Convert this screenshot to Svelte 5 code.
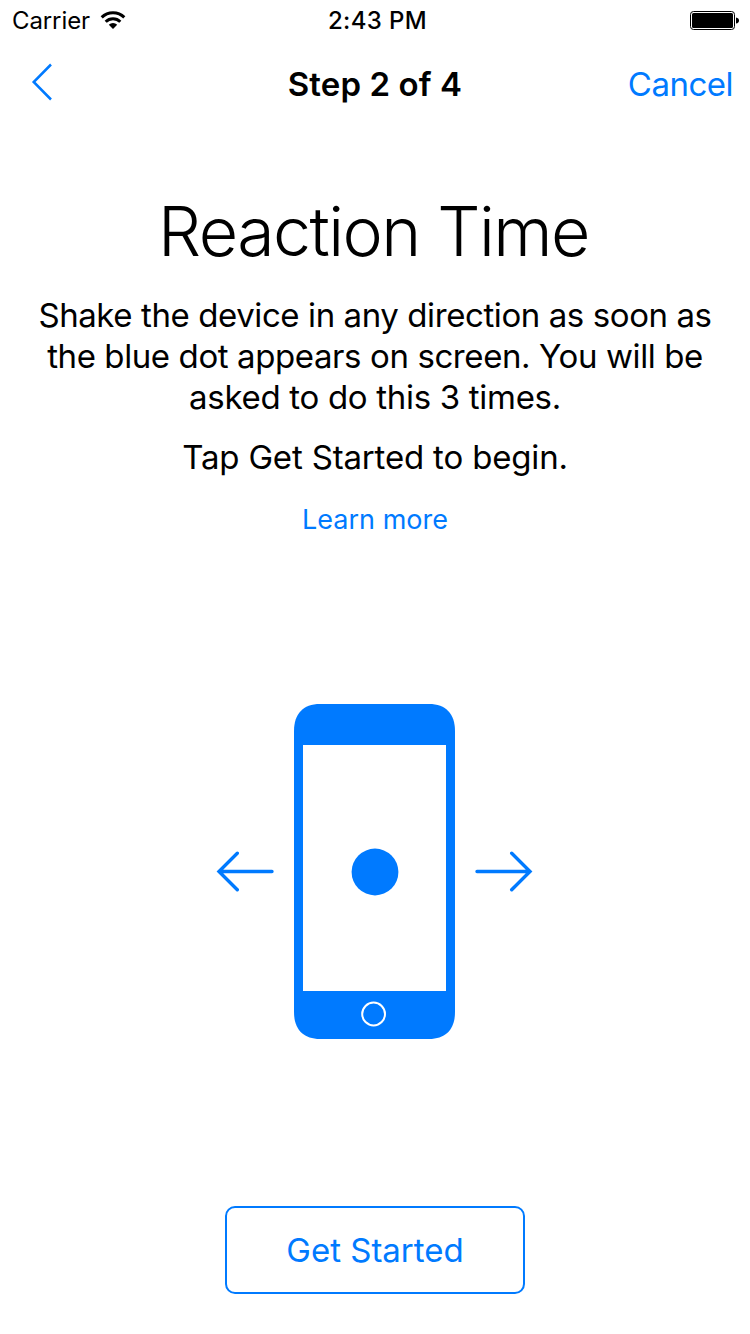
<script>
  const lines = [
    { text: 'Shake the device in any direction as soon as', spacing: -0.41 },
    { text: 'the blue dot appears on screen. You will be', spacing: -0.4 },
    { text: 'asked to do this 3 times.', spacing: -0.3 }
  ];
</script>

<div class="screen">
  <header class="status">
    <div class="carrier"><span>Carrier</span>
      <svg width="26" height="20" viewBox="0 0 26 20"><g fill="none" stroke="#000" stroke-width="3"><path d="M1.700 7.400a16 16 0 0 1 22.600 0"/><path d="M5.700 11.700a10.400 10.400 0 0 1 14.600 0"/></g><path d="M13 19l-4.200-4.200a6 6 0 0 1 8.400 0z"/></svg>
    </div>
    <div class="time">2:43 PM</div>
    <div class="battery"><svg width="49" height="20" viewBox="0 0 49 20"><rect x=".5" y=".5" width="44" height="18" rx="3" fill="none" stroke="#000"/><rect x="2" y="2" width="41" height="15" rx="1.5"/><path d="M46 6.5q3 .5 3 3t-3 3z"/></svg></div>
  </header>
  <nav>
    <svg class="back" width="22" height="38" viewBox="0 0 22 38"><path d="M20 1.500L2.700 19l17.300 17.500" fill="none" stroke="#007aff" stroke-width="2.5"/></svg>
    <h2>Step 2 of 4</h2>
    <button class="cancel">Cancel</button>
  </nav>
  <main>
    <h1>Reaction Time</h1>
    <p class="body">{#each lines as line}<span style="letter-spacing: {line.spacing}px">{line.text}</span>{/each}</p>
    <p class="tap">Tap Get Started to begin.</p>
    <button class="learn">Learn more</button>
    <svg class="art" width="320" height="336" viewBox="0 0 320 336">
      <path d="M105 0H214C231 0 240 10 240 27V308C240 325 231 335 214 335H105C88 335 79 325 79 308V27C79 10 88 0 105 0Z" fill="#007aff"/>
      <rect x="88" y="41" width="143" height="246" fill="#fff"/>
      <circle cx="160" cy="168" r="23.4" fill="#007aff"/>
      <circle cx="158.6" cy="310" r="11.4" fill="none" stroke="#fff" stroke-width="2"/>
      <g fill="none" stroke="#007aff" stroke-width="3.4" stroke-linecap="round" stroke-linejoin="miter"><path d="M57 167.500H4M22.300 149.300L4 167.500l18.300 18.200"/><path d="M262 167.500h53M296.700 149.300l18.300 18.200-18.300 18.200"/></g>
    </svg>
    <button class="start">Get Started</button>
  </main>
</div>

<style>
  :global(body) { background: #fff; }
  .screen { width: 750px; height: 1334px; overflow: hidden; color: #000; font-family: Inter, sans-serif; display: flex; flex-direction: column; }
  button { font-family: inherit; background: none; border: 0; padding: 0; color: #007aff; white-space: nowrap; }
  h1, h2, p { margin: 0; font-weight: 400; white-space: nowrap; }
  svg { display: block; }
  .status { height: 42px; display: grid; grid-template-columns: 1fr auto 1fr; align-items: center; padding: 0 11px 0 12px; box-sizing: border-box; font-size: 24px; line-height: 30px; }
  .carrier { display: flex; align-items: center; gap: 10px; letter-spacing: -.1px; }
  .carrier svg { margin-top: -3px; }
  .time { font-weight: 500; font-size: 24px; letter-spacing: .35px; padding-left: 4px; }
  .battery { justify-self: end; }
  nav { height: 84px; display: grid; grid-template-columns: 1fr auto 1fr; align-items: center; padding: 0 17px 0 31px; box-sizing: border-box; }
  .back { margin-top: -4px; }
  h2 { font-size: 33px; font-weight: 600; letter-spacing: .1px; margin-left: -14px; }
  .cancel { justify-self: end; font-size: 33px; letter-spacing: -.5px; }
  main { display: flex; flex-direction: column; align-items: center; }
  h1 { margin-top: 63px; font-size: 68px; line-height: 84px; font-weight: 300; letter-spacing: -1.55px; text-indent: -3px; }
  .body { margin-top: 22px; font-size: 33px; line-height: 41px; display: flex; flex-direction: column; align-items: center; }
  .tap { margin-top: 19px; font-size: 33px; line-height: 41px; letter-spacing: -.17px; }
  .learn { margin-top: 25px; font-size: 27px; line-height: 34px; }
  .art { margin-top: 167px; }
  .start { margin-top: 166px; width: 300px; height: 88px; border: 2px solid #007aff; border-radius: 10px; font-size: 33px; }
</style>
